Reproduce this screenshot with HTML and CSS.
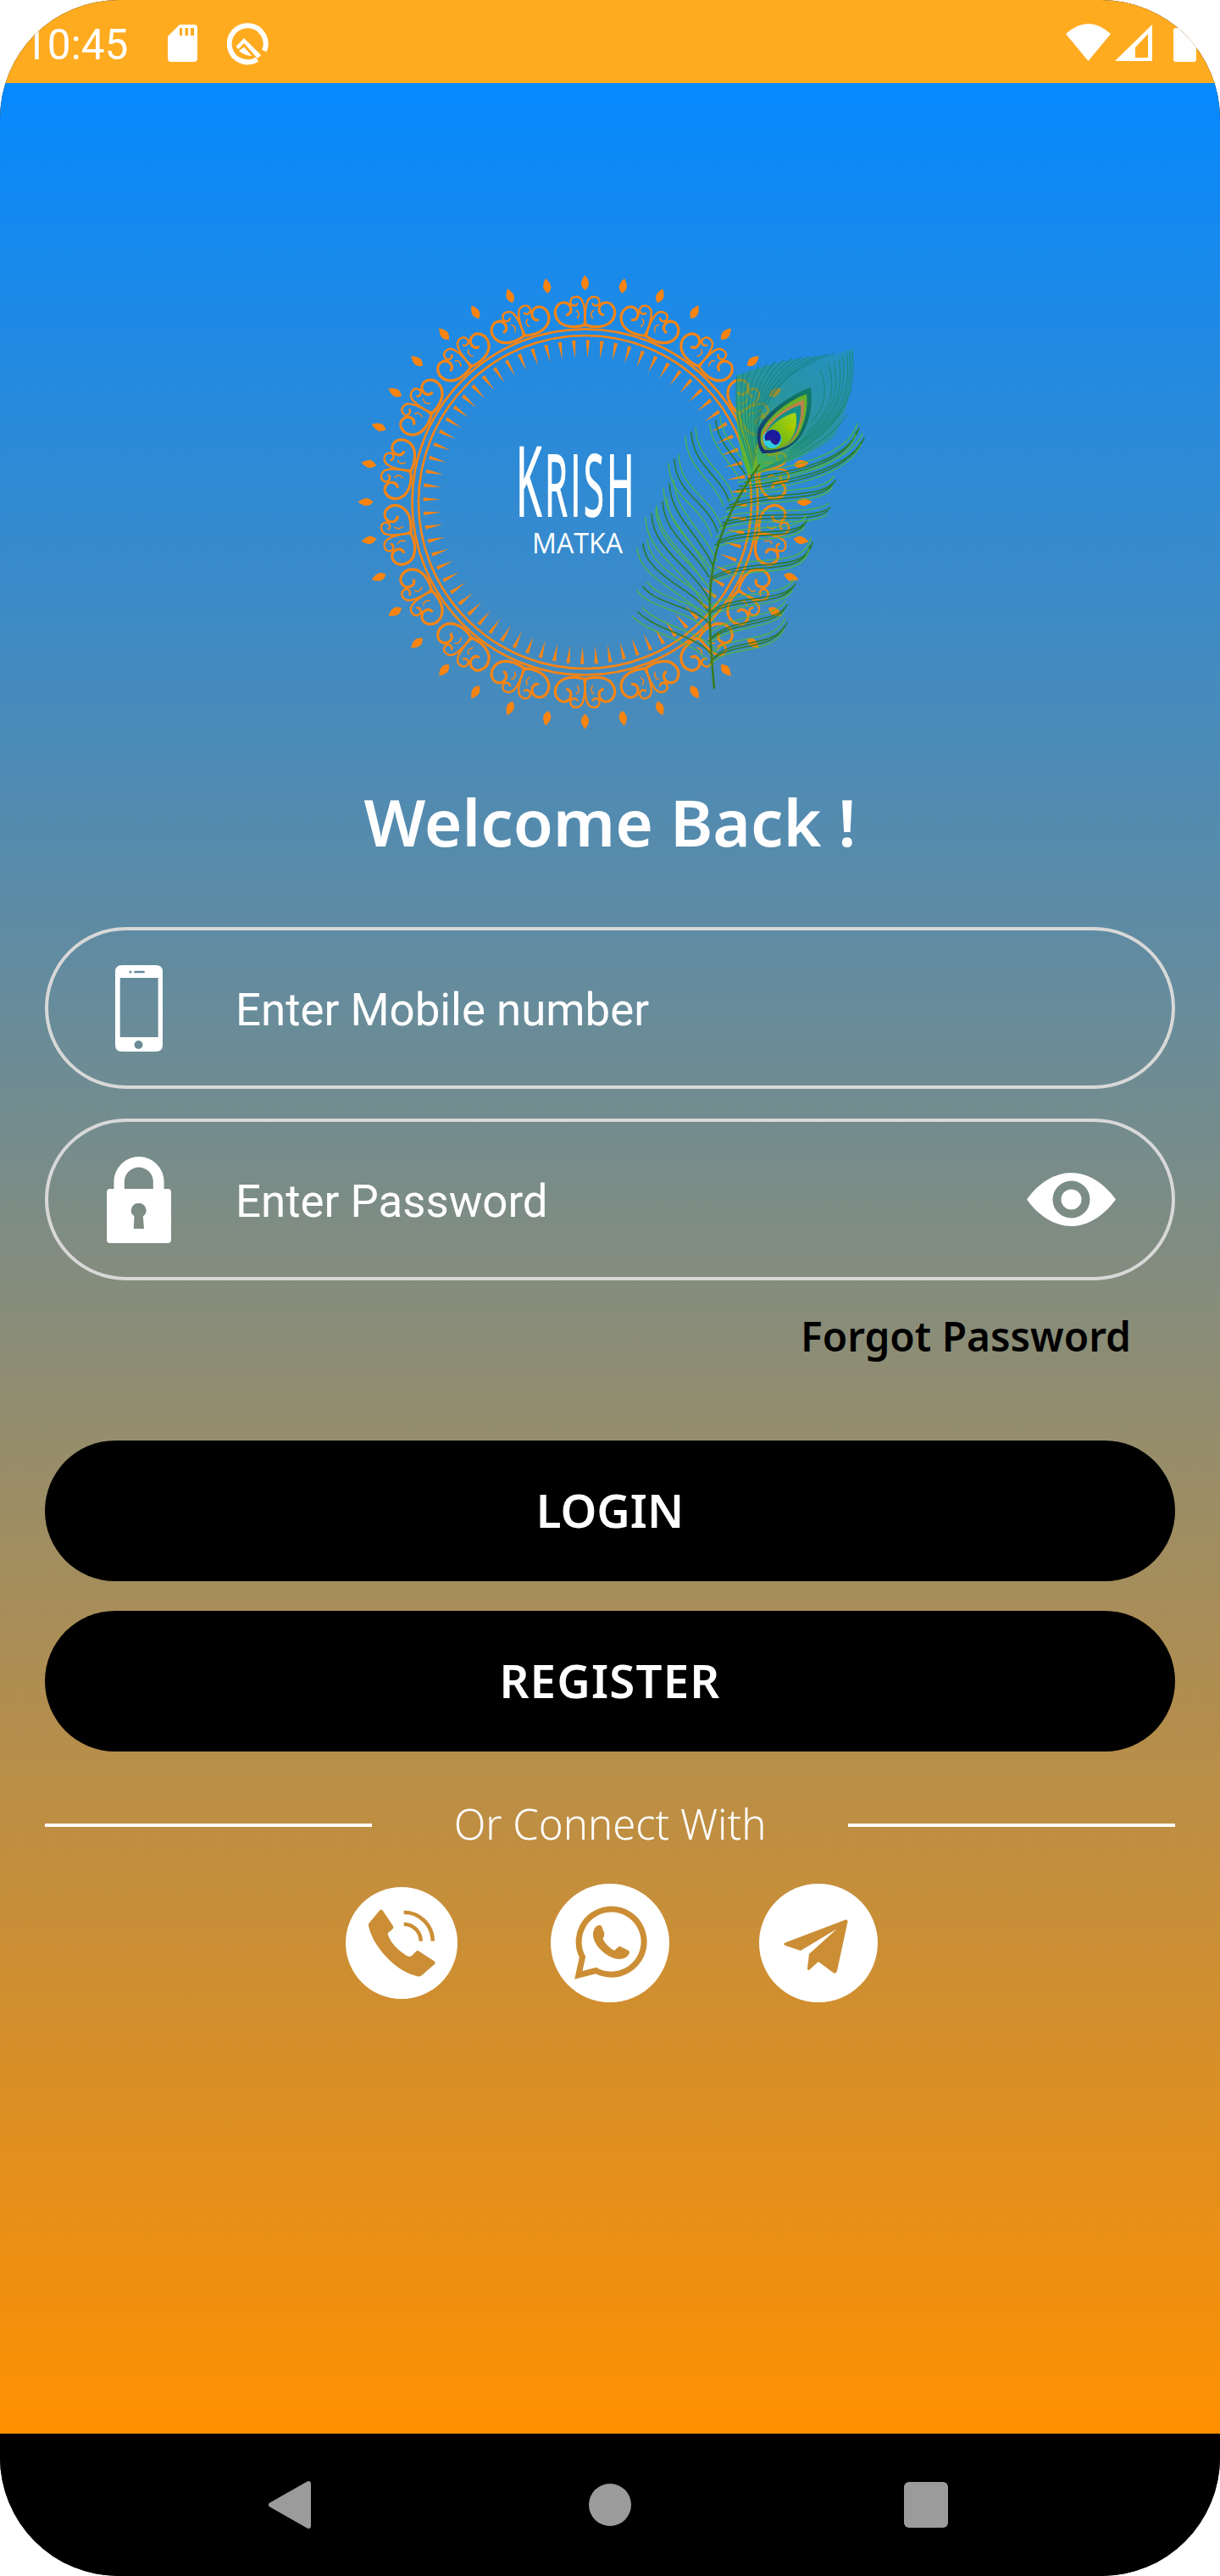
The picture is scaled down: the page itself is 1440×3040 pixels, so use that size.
FILE: index.html
```html
<!DOCTYPE html>
<html lang="en">
<head>
<meta charset="utf-8">
<title>Krish Matka - Login</title>
<link rel="stylesheet" href="styles.css">
</head>
<body>
<div class="screen">
  <header class="status">
    <span class="time">10:45</span>
    <svg class="st sd" viewBox="198 0 35 98"><path fill-rule="evenodd" d="M198 43L212 29H229Q233 29 233 33V69Q233 73 229 73H202Q198 73 198 69ZM212 33V42H215V33ZM218.5 33V42H222V33ZM225 33V42H229V33Z"/></svg>
    <svg class="st q" viewBox="268 0 50 98"><path class="q-ring" d="M303.5 70A21.5 21.5 0 1 1 312 60"/><path d="M278.5 55L288 45L308 65L304 69L288 51L281.5 58ZM282 60L288 55.500L297.500 66Q288 65.500 282 60Z"/></svg>
    <span class="status-gap"></span>
    <svg class="st wifi" viewBox="1258 0 53 98"><path d="M1284.5 72L1258 40Q1284.5 16 1311 40Z"/></svg>
    <svg class="st signal" viewBox="1316 0 44 98"><path fill-rule="evenodd" d="M1360 29V72H1316ZM1355 40L1340 56V68H1355Z"/></svg>
    <svg class="st battery" viewBox="1385 0 27 98"><path d="M1388 33H1412V70Q1412 73 1409 73H1388Q1385 73 1385 70V36Q1385 33 1388 33Z"/></svg>
  </header>

  <main class="main">
    <svg class="logo" viewBox="400 310 640 560" role="img" aria-label="Krish Matka logo">
      <defs>
        <path id="leaf" d="M0-268C3-264 5-260 4.500-257C4-254 2-252 0-250C-2-252-4-254-4.500-257C-5-260-3-264 0-268Z"/>
        <g id="leaf6">
          <use href="#leaf"/><use href="#leaf" transform="rotate(10)"/><use href="#leaf" transform="rotate(20)"/>
          <use href="#leaf" transform="rotate(30)"/><use href="#leaf" transform="rotate(40)"/><use href="#leaf" transform="rotate(50)"/>
        </g>
        <path id="tick" d="M-2.200-191L2.200-191L0-170Z"/>
        <g id="tick6">
          <use href="#tick"/><use href="#tick" transform="rotate(5)"/><use href="#tick" transform="rotate(10)"/>
          <use href="#tick" transform="rotate(15)"/><use href="#tick" transform="rotate(20)"/><use href="#tick" transform="rotate(25)"/>
        </g>
        <g id="half">
          <path class="sc-a" d="M0-209C-12-205-27-206-33-216C-39-227-31-238-22-235C-15-232-15-223-21-221"/>
          <path class="sc-b" d="M1-210C-1-218 1-229-3-237C-6-244-16-244-17-237C-18-232-11-230-9-234"/>
          <path class="sc-c" d="M-10-226Q-5-223-9-217"/>
        </g>
        <g id="motif"><use href="#half"/><use href="#half" transform="scale(-1 1)"/></g>
        <g id="motif3"><use href="#motif"/><use href="#motif" transform="rotate(20)"/><use href="#motif" transform="rotate(40)"/></g>
        <linearGradient id="vane" x1="0" y1="1" x2="1" y2="0">
          <stop offset="0" stop-color="#58c81e" stop-opacity=".95"/>
          <stop offset=".45" stop-color="#2c9f5e" stop-opacity=".55"/>
          <stop offset="1" stop-color="#2f9f7c" stop-opacity=".3"/>
        </linearGradient>
        <linearGradient id="lime" x1="0" y1="1" x2="1" y2="0">
          <stop offset="0" stop-color="#5fa800"/>
          <stop offset="1" stop-color="#b9e000"/>
        </linearGradient>
        <linearGradient id="rim" x1="0" y1="1" x2="1" y2="0">
          <stop offset="0" stop-color="#15266e"/>
          <stop offset=".6" stop-color="#0d6a58"/>
          <stop offset="1" stop-color="#0f7d63"/>
        </linearGradient>
        <g id="barbsL">
          <path d="M845 496C846 520 868 540 880 560"/>
          <path d="M816 510C818 550 850 560 861 592"/>
          <path d="M796 542C798 585 835 590 847 628"/>
          <path d="M790 571C792 610 825 630 841 667"/>
          <path d="M782 592C784 630 820 650 837 681"/>
          <path d="M769 606C770 650 820 670 838 710"/>
          <path d="M759 642C762 680 820 695 838 724"/>
          <path d="M759 692C775 715 825 715 839 739"/>
          <path d="M753 722C775 745 825 750 841 774"/>
        </g>
        <g id="barbsR">
          <path d="M1020 517C1002 556 930 568 873 574"/>
          <path d="M1014 505C1002 545 935 556 882 565"/>
          <path d="M986 567C972 590 910 578 861 596"/>
          <path d="M980 599C960 615 900 600 853 617"/>
          <path d="M953 614C940 636 885 620 847 639"/>
          <path d="M959 640C950 680 885 655 841 681"/>
          <path d="M939 689C925 712 870 700 839 721"/>
          <path d="M929 714C918 736 865 728 839 753"/>
          <path d="M929 735C912 768 865 750 841 778"/>
        </g>
      </defs>

      <g class="mandala" transform="translate(690.500 592.500)">
        <circle class="ring" r="204"/>
        <circle class="ring" r="196.500"/>
        <g transform="rotate(1)">
          <use href="#tick6"/><use href="#tick6" transform="rotate(30)"/><use href="#tick6" transform="rotate(60)"/>
          <use href="#tick6" transform="rotate(90)"/><use href="#tick6" transform="rotate(120)"/><use href="#tick6" transform="rotate(150)"/>
          <use href="#tick6" transform="rotate(180)"/><use href="#tick6" transform="rotate(210)"/><use href="#tick6" transform="rotate(240)"/>
          <use href="#tick6" transform="rotate(270)"/><use href="#tick6" transform="rotate(300)"/><use href="#tick6" transform="rotate(330)"/>
        </g>
        <use href="#leaf6"/><use href="#leaf6" transform="rotate(60)"/><use href="#leaf6" transform="rotate(120)"/>
        <use href="#leaf6" transform="rotate(180)"/><use href="#leaf6" transform="rotate(240)"/><use href="#leaf6" transform="rotate(300)"/>
        <use href="#motif3"/><use href="#motif3" transform="rotate(60)"/><use href="#motif3" transform="rotate(120)"/>
        <use href="#motif3" transform="rotate(180)"/><use href="#motif3" transform="rotate(240)"/><use href="#motif3" transform="rotate(300)"/>
      </g>

      <text class="krish" x="609" y="609" textLength="143" lengthAdjust="spacingAndGlyphs"><tspan class="krish-k">K</tspan>RISH</text>
      <text class="matka" x="628" y="653" textLength="107" lengthAdjust="spacingAndGlyphs">MATKA</text>

      <g class="feather">
        <path fill="url(#vane)" d="M1008 410C1000 414 990 416 985 419C950 420 910 428 870 443C866 480 870 530 883 560C915 552 955 538 983 517C1000 490 1006 457 1008 410Z"/>
        <g class="fan fan-teal">
          <path d="M870 443C866 480 875 520 888 553"/>
          <path d="M878 440C870 472 877 515 889 549"/>
          <path d="M885 437C873 470 880 510 890 545"/>
          <path d="M895 433C879 462 881 505 891 541"/>
          <path d="M905 430C885 455 882 500 892 538"/>
          <path d="M915 427C892 450 885 490 893 530"/>
          <path d="M925 425C900 445 888 480 893 525"/>
          <path d="M935 423C910 440 892 470 893 518"/>
          <path d="M945 422C920 435 895 465 893 515"/>
          <path d="M955 421C930 432 905 455 895 500"/>
          <path d="M965 420C940 430 910 450 897 490"/>
          <path d="M975 418C950 427 920 445 905 478"/>
          <path d="M985 417C960 425 930 440 912 465"/>
        </g>
        <g class="fan fan-green">
          <path d="M1006 415C1012 470 990 510 930 535"/>
          <path d="M1003 417C1008 470 988 507 933 531"/>
          <path d="M1000 418C1005 470 985 505 935 528"/>
          <path d="M995 421C1001 470 981 502 940 524"/>
          <path d="M990 424C998 470 978 500 945 520"/>
          <path d="M984 427C994 470 975 497 949 515"/>
          <path d="M978 430C990 470 972 495 952 510"/>
          <path d="M968 436C980 465 970 485 958 498"/>
          <path d="M1005 458C990 505 950 535 885 560"/>
          <path d="M1000 490C975 525 930 545 885 560"/>
        </g>
        <g class="barbs barbs-dark">
          <use href="#barbsL"/>
          <use href="#barbsR"/>
          <use href="#barbsR" transform="translate(-3 4)"/>
        </g>
        <g class="barbs barbs-light">
          <use href="#barbsL" transform="translate(-7 5)"/>
          <use href="#barbsL" transform="translate(5 -5)"/>
          <use href="#barbsR" transform="translate(-2 -5)"/>
          <use href="#barbsR" transform="translate(-4 8)"/>
        </g>
        <path class="stem" d="M843 812C838 760 836 710 840 680C845 640 860 600 896 549"/>
        <path fill="url(#rim)" d="M957 457C935 465 905 485 895 505C892 518 895 530 900 535C915 536 935 530 945 515C955 500 960 480 957 457Z"/>
        <path fill="#6db51c" d="M952 465C932 472 908 490 899 508C896 518 898 527 903 531C918 532 934 527 942 514C950 500 954 482 952 465Z"/>
        <path fill="#c9803f" d="M949 472C930 478 908 494 901 510C898 519 900 527 905 530C919 531 933 525 940 513C947 500 950 486 949 472Z"/>
        <path fill="#12907f" d="M945 478C928 483 909 497 903 512C900 520 902 527 906 530C919 530 931 525 938 513C944 502 946 490 945 478Z"/>
        <path fill="url(#lime)" d="M939 487C925 490 908 502 903 514C901 522 904 528 908 530C920 530 932 524 937 512C940 504 941 495 939 487Z"/>
        <circle class="eye-cyan" cx="911.500" cy="518" r="11"/>
        <circle class="eye-navy" cx="912" cy="516.500" r="9.500"/>
        <path class="eye-cyan" d="M901.500 520L909 519.500Q911 524 916 525.500L911 529Q903 527 901.500 520Z"/>
      </g>
    </svg>

    <h1 class="title">Welcome Back !</h1>

    <div class="field field-first">
      <span class="field-icon">
        <svg class="ic-phone" viewBox="136 1138 56 102"><path fill-rule="evenodd" d="M144 1138H184Q192 1138 192 1146V1232Q192 1240 184 1240H144Q136 1240 136 1232V1146Q136 1138 144 1138ZM141.700 1153V1223H186.700V1153ZM158.300 1144.800V1147.300H170.700V1144.800ZM154 1144.500A1.500 1.500 0 1 0 154 1147.500A1.500 1.500 0 1 0 154 1144.500ZM163.500 1227A5 5 0 1 0 163.500 1237A5 5 0 1 0 163.500 1227Z"/></svg>
      </span>
      <span class="field-text">Enter Mobile number</span>
    </div>

    <div class="field field-second">
      <span class="field-icon">
        <svg class="ic-lock" viewBox="126 1364 76 102"><path fill-rule="evenodd" d="M134.400 1402V1393.600A29.600 29.600 0 0 1 193.600 1393.600V1402H198Q202 1402 202 1406V1462Q202 1466 198 1466H130Q126 1466 126 1462V1406Q126 1402 130 1402ZM146.800 1402H180.800V1393.600A17 17 0 0 0 146.800 1393.600ZM163.600 1419A8.500 8.500 0 0 0 158.500 1434.500L157.700 1449H170L168.800 1434.500A8.500 8.500 0 0 0 163.600 1419Z"/></svg>
      </span>
      <span class="field-text">Enter Password</span>
      <svg class="ic-eye" viewBox="1212 1384 105 63"><path fill-rule="evenodd" d="M1212 1415.500C1226 1396 1245 1384 1264.500 1384C1284 1384 1303 1396 1317 1415.500C1303 1435 1284 1447 1264.500 1447C1245 1447 1226 1435 1212 1415.500ZM1264.500 1393.500A22 22 0 1 0 1264.500 1437.500A22 22 0 1 0 1264.500 1393.500ZM1264.500 1403.500A12 12 0 1 1 1264.500 1427.500A12 12 0 1 1 1264.500 1403.500Z"/></svg>
    </div>

    <a class="forgot">Forgot Password</a>

    <button class="btn btn-login">LOGIN</button>
    <button class="btn btn-register">REGISTER</button>

    <div class="connect">
      <span class="connect-line"></span>
      <span class="connect-text">Or Connect With</span>
      <span class="connect-line"></span>
    </div>

    <div class="socials">
      <span class="social social-call">
        <svg viewBox="408 2227 132 132"><path d="M449 2253.500Q451 2253 452 2255L464 2273Q465 2275 463 2277L457.500 2281.500Q461 2296 480 2308Q484 2310 486 2308L491 2303Q493 2301 495 2303L512 2314Q514.500 2316 513 2318L498 2331Q495.500 2333.500 490 2331.500Q470 2326 452 2305Q438 2288 435 2273Q434.500 2270.500 436 2269Z"/><path class="arc" d="M476.700 2256.700A34 34 0 0 1 510.700 2290.700M476.700 2270.700A20 20 0 0 1 496.700 2290.700"/></svg>
      </span>
      <span class="social social-wa">
        <svg viewBox="650 2223 140 140"><path class="wa-ring" d="M703.300 2325.500A38.500 38.500 0 1 0 687.500 2309.500L682.800 2331Z"/><path d="M707 2272Q709 2271.500 710 2273L713.500 2282Q713.500 2284 711.500 2288Q716 2297 725 2302L730 2297.500Q732 2296.500 734 2298L742 2302Q743.500 2303 742.500 2306Q739 2312 730 2312Q718 2311 707 2299Q698 2288 700.500 2279Q702 2273 707 2272Z"/></svg>
      </span>
      <span class="social social-tg">
        <svg viewBox="896 2223 140 140"><path d="M998 2265.500Q1001 2265 1000.500 2268L988 2326Q986.500 2330 983.500 2328L966 2315L955.500 2324.500Q953 2326 953 2323L955 2306L987.500 2276.500L945 2302L927 2296Q923.500 2294 927 2292.500Z"/></svg>
      </span>
    </div>
  </main>

  <nav class="navbar">
    <svg class="nav-back" viewBox="0 0 50 56"><path d="M47 3L3 28L47 53Z"/></svg>
    <span class="nav-home"></span>
    <span class="nav-recent"></span>
  </nav>
</div>
</body>
</html>
```

FILE: styles.css
```css
* { box-sizing: border-box; }
html, body { margin: 0; padding: 0; background: #fff; }
.screen {
  width: 1440px;
  height: 3040px;
  border-radius: 140px;
  overflow: hidden;
  display: flex;
  flex-direction: column;
  background: #000;
}

/* status bar */
.status {
  height: 98px;
  flex: none;
  background: #ffab20;
  display: flex;
  align-items: stretch;
  padding-left: 28px;
  padding-right: 28px;
  color: #fff;
}
.time {
  font: 400 49.500px/98px Roboto, sans-serif;
  padding-top: 4px;
  width: 122px;
  white-space: nowrap;
}
.st { height: 98px; fill: #fff; flex: none; }
.sd { width: 35px; margin-left: 48px; }
.q { width: 50px; margin-left: 35px; }
.q-ring { fill: none; stroke: #fff; stroke-width: 6; }
.status-gap { flex: 1; }
.wifi { width: 53px; }
.signal { width: 44px; margin-left: 5px; }
.battery { width: 27px; margin-left: 25px; }

/* main */
.main {
  flex: 1;
  background: linear-gradient(180deg, #0589ff 0%, #ff9000 100%);
  padding: 212px 53px 0;
  display: flex;
  flex-direction: column;
  min-height: 0;
}
.logo {
  width: 640px;
  height: 560px;
  flex: none;
  align-self: center;
  display: block;
}
.ring { fill: none; stroke: #fb8410; stroke-width: 2.600; }
.mandala { fill: #fb8410; }
.sc-a, .sc-b, .sc-c { fill: none; stroke: #fb8410; stroke-linecap: round; }
.sc-a { stroke-width: 3.200; }
.sc-b { stroke-width: 2.400; }
.sc-c { stroke-width: 1.500; }
.krish {
  font: 400 100px "Open Sans", sans-serif;
  letter-spacing: 8px;
  fill: #fff;
  stroke: #fff;
  stroke-width: 2;
  stroke-linejoin: round;
}
.krish-k { font-size: 114px; }
.matka { font: 400 33.500px "Open Sans", sans-serif; fill: #fff; }
.feather { opacity: .92; }
.fan, .barbs { fill: none; stroke-linecap: round; }
.fan-teal { stroke: #14837c; stroke-width: 1.200; opacity: .8; }
.fan-green { stroke: #198a6c; stroke-width: 1.200; opacity: .8; }
.barbs-dark { stroke: #2b7a18; stroke-width: 1.500; }
.barbs-light { stroke: #55bb35; stroke-width: 1.500; opacity: .85; }
.stem { fill: none; stroke: #3a7a10; stroke-width: 2.500; stroke-linecap: round; }
.eye-cyan { fill: #2fd4e4; }
.eye-navy { fill: #1a1199; }

.title {
  margin: 59px 0 0;
  height: 81px;
  font: 600 76.500px/80px "Noto Sans", sans-serif;
  color: #fff;
  text-align: center;
  white-space: nowrap;
}

/* fields */
.field {
  height: 191px;
  flex: none;
  border: 4px solid #d8d8d8;
  border-radius: 96px;
  display: flex;
  align-items: center;
  padding-left: 67px;
  padding-right: 66px;
}
.field-first { margin-top: 84px; }
.field-second { margin-top: 35px; }
.field-icon {
  width: 80px;
  flex: none;
  display: flex;
  justify-content: center;
}
.field-icon svg { display: block; fill: #fff; }
.ic-phone { width: 56px; height: 102px; }
.ic-lock { width: 76px; height: 102px; }
.ic-eye { width: 105px; height: 63px; fill: #fff; margin-left: auto; }
.field-text {
  margin-left: 74px;
  padding-top: 4px;
  font: 400 52.800px/70px Roboto, sans-serif;
  color: #fff;
  white-space: nowrap;
}

.forgot {
  margin-top: 36px;
  height: 60px;
  align-self: flex-end;
  margin-right: 52px;
  font: 600 47.800px/60px "Noto Sans", sans-serif;
  color: #000;
  white-space: nowrap;
}

.btn {
  flex: none;
  height: 166px;
  border: 0;
  border-radius: 83px;
  background: #000;
  color: #fff;
  font: 600 54.500px/66px "Noto Sans", sans-serif;
  padding: 0 0 3px;
}
.btn-login { margin-top: 93px; }
.btn-register { margin-top: 35px; letter-spacing: 1.200px; }

.connect {
  margin-top: 55px;
  height: 60px;
  flex: none;
  display: flex;
  align-items: center;
}
.connect-line { flex: 1; height: 4px; background: #fff; margin-top: 4px; }
.connect-text {
  width: 562px;
  text-align: center;
  font: 300 49px/60px "Noto Sans", sans-serif;
  color: #fff;
  white-space: nowrap;
}

.socials {
  margin-top: 41px;
  display: grid;
  grid-template-columns: repeat(3, 246px);
  justify-content: center;
  align-items: center;
  justify-items: center;
  height: 140px;
  flex: none;
}
.social { display: block; border-radius: 50%; background: #fff; }
.social svg { display: block; width: 100%; height: 100%; fill: #cb8e35; }
.social-call { width: 132px; height: 132px; }
.social-wa, .social-tg { width: 140px; height: 140px; }
.arc { fill: none; stroke: #cb8e35; stroke-width: 4.500; }
.wa-ring { fill: none; stroke: #cb8e35; stroke-width: 7; stroke-linejoin: miter; }

/* nav */
.navbar {
  height: 168px;
  flex: none;
  background: #000;
  display: flex;
  align-items: center;
  padding-left: 317px;
}
.nav-back { width: 50px; height: 56px; fill: #9b9b9b; stroke: #9b9b9b; stroke-width: 6; stroke-linejoin: round; }
.nav-home { width: 50px; height: 50px; border-radius: 50%; background: #9b9b9b; margin-left: 328px; }
.nav-recent { width: 52px; height: 54px; border-radius: 6px; background: #9b9b9b; margin-left: 322px; }
```
